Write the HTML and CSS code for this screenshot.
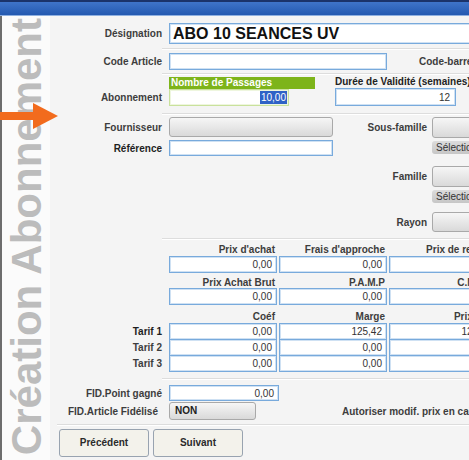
FILE: index.html
```html
<!DOCTYPE html>
<html lang="fr">
<head>
<meta charset="utf-8">
<title>Création Abonnement</title>
<link rel="stylesheet" href="styles.css">
</head>
<body>
<div class="app">
  <div class="titlebar"></div>
  <div class="body">
    <aside class="side"><div class="side-title">Création Abonnement</div></aside>
    <main class="main">
      <div class="form">
        <div class="row row-desig">
          <div class="lbl">Désignation</div>
          <div class="inp desig">ABO 10 SEANCES UV</div>
        </div>
        <div class="sep"></div>
        <div class="row row-code">
          <div class="lbl">Code Article</div>
          <div class="inp code"></div>
          <div class="lbl-free barre">Code-barre</div>
        </div>
        <div class="sep sep-b"></div>
        <div class="row row-abo">
          <div class="lbl lbl-abo">Abonnement</div>
          <div class="abo-col">
            <div class="green-head">Nombre de Passages</div>
            <div class="inp green-inp"><span class="sel">10,00</span></div>
          </div>
          <div class="duree-col">
            <div class="duree-head">Durée de Validité (semaines)</div>
            <div class="inp duree">12</div>
          </div>
        </div>
        <div class="sep sep-c"></div>
        <div class="section">
          <div class="sec-left">
            <div class="row row-four">
              <div class="lbl">Fournisseur</div>
              <div class="btn four"></div>
            </div>
            <div class="row row-ref">
              <div class="lbl lbl-dark">Référence</div>
              <div class="inp ref"></div>
            </div>
          </div>
          <div class="sec-right">
            <div class="rrow r-sous">
              <div class="rlbl">Sous-famille</div>
              <div class="btn rbtn"></div>
            </div>
            <div class="rrow r-sel1">
              <div class="rlbl"></div>
              <div class="selbtn">Sélection</div>
            </div>
            <div class="rrow r-fam">
              <div class="rlbl">Famille</div>
              <div class="btn rbtn"></div>
            </div>
            <div class="rrow r-sel2">
              <div class="rlbl"></div>
              <div class="selbtn">Sélection</div>
            </div>
            <div class="rrow r-ray">
              <div class="rlbl">Rayon</div>
              <div class="btn rbtn"></div>
            </div>
          </div>
        </div>
        <div class="sep sep-d"></div>

        <div class="prow phead h1">
          <div class="lbl"></div>
          <div class="pc">Prix d'achat</div>
          <div class="pc">Frais d'approche</div>
          <div class="pc">Prix de revient</div>
        </div>
        <div class="prow">
          <div class="lbl"></div>
          <div class="inp pcell">0,00</div>
          <div class="inp pcell">0,00</div>
          <div class="inp pcell">0,00</div>
        </div>
        <div class="prow phead h2">
          <div class="lbl"></div>
          <div class="pc">Prix Achat Brut</div>
          <div class="pc">P.A.M.P</div>
          <div class="pc">C.M.U.P</div>
        </div>
        <div class="prow">
          <div class="lbl"></div>
          <div class="inp pcell">0,00</div>
          <div class="inp pcell">0,00</div>
          <div class="inp pcell">0,00</div>
        </div>
        <div class="prow phead h3">
          <div class="lbl"></div>
          <div class="pc">Coéf</div>
          <div class="pc">Marge</div>
          <div class="pc">Prix TTC</div>
        </div>
        <div class="prow trow">
          <div class="lbl lbl-dark">Tarif 1</div>
          <div class="inp pcell">0,00</div>
          <div class="inp pcell">125,42</div>
          <div class="inp pcell">125,42</div>
        </div>
        <div class="prow trow">
          <div class="lbl">Tarif 2</div>
          <div class="inp pcell">0,00</div>
          <div class="inp pcell">0,00</div>
          <div class="inp pcell">0,00</div>
        </div>
        <div class="prow trow">
          <div class="lbl">Tarif 3</div>
          <div class="inp pcell">0,00</div>
          <div class="inp pcell">0,00</div>
          <div class="inp pcell">0,00</div>
        </div>
        <div class="sep sep-e"></div>
        <div class="row row-fid1">
          <div class="lbl">FID.Point gagné</div>
          <div class="inp fidp">0,00</div>
        </div>
        <div class="row row-fid2">
          <div class="lbl lbl-fid">FID.Article Fidélisé</div>
          <div class="btn non">NON</div>
          <div class="lbl-free autor">Autoriser modif. prix en caisse</div>
        </div>
        <div class="sep sep-f"></div>
        <div class="actions">
          <div class="act">Précédent</div>
          <div class="act">Suivant</div>
        </div>
      </div>
    </main>
  </div>
  <svg class="arrow" width="60" height="27" viewBox="0 0 60 27">
    <rect x="0" y="9" width="34" height="8" fill="#f26b1d"/>
    <polygon points="33,0 58,13 33,26" fill="#f26b1d"/>
  </svg>
</div>
</body>
</html>
```

FILE: styles.css
```css
* { box-sizing: border-box; }
html, body { margin: 0; padding: 0; }
body {
  font-family: "Liberation Sans", Arial, sans-serif;
  font-size: 10px;
  color: #333;
  background: #f4f4f4;
}
.app {
  position: relative;
  width: 469px;
  height: 460px;
  overflow: hidden;
  display: flex;
  flex-direction: column;
}
.titlebar {
  flex: none;
  height: 16px;
  border-top: 2px solid #1b336a;
  border-bottom: 1px solid #8fb0e0;
  background: linear-gradient(#3f74c9, #2459b0);
}
.body {
  flex: 1;
  display: flex;
  min-height: 0;
}
.side {
  flex: none;
  width: 50px;
  border-left: 2px solid #6d6d6d;
  background: #fbfbfb;
  display: flex;
  flex-direction: column;
  justify-content: flex-end;
  align-items: flex-start;
  padding-bottom: 5px;
  padding-left: 4px;
  overflow: hidden;
}
.side-title {
  writing-mode: vertical-rl;
  transform: rotate(180deg);
  font-size: 42px;
  line-height: 42px;
  font-weight: bold;
  color: #bcbcbc;
  white-space: nowrap;
}
.main {
  flex: 1;
  background: #f4f4f4;
  overflow: hidden;
  min-width: 0;
}
.form {
  width: 560px;
  padding-top: 7px;
}
.row {
  display: flex;
  align-items: center;
}
.lbl {
  flex: none;
  width: 112px;
  margin-right: 7px;
  text-align: right;
  font-weight: bold;
  color: #3d3d3d;
  white-space: nowrap;
}
.lbl-dark { color: #1e1e1e; }
.lbl-free {
  font-weight: bold;
  color: #3d3d3d;
  white-space: nowrap;
}
.inp {
  background: #fff;
  border: 1px solid #78aadc;
  box-shadow: inset 0 0 0 1px #cfe1f3;
  display: flex;
  align-items: center;
  justify-content: flex-end;
  padding-right: 4px;
  color: #333;
  white-space: nowrap;
}
.sep {
  height: 1px;
  background: #dddddd;
  margin-left: 112px;
  box-shadow: 0 1px 0 #ffffff;
}

/* Désignation */
.row-desig { height: 21px; }
.desig {
  width: 330px;
  height: 21px;
  justify-content: flex-start;
  padding-left: 3px;
  font-size: 16px;
  font-weight: bold;
  color: #111;
}
.row-desig + .sep { margin-top: 4px; }

/* Code article */
.row-code { height: 17px; margin-top: 4px; }
.code { width: 218px; height: 17px; }
.barre { margin-left: 32px; }
.sep-b { margin-top: 3px; }

/* Abonnement */
.row-abo { margin-top: 2px; align-items: flex-end; }
.lbl-abo { height: 17px; line-height: 17px; }
.abo-col { width: 120px; display: flex; flex-direction: column; }
.green-head {
  width: 146px;
  height: 12px;
  line-height: 12px;
  background: #7db41a;
  color: #fff;
  font-weight: bold;
  padding-left: 2px;
  white-space: nowrap;
}
.green-inp {
  height: 17px;
  border-color: #c9e19c;
  box-shadow: inset 0 0 0 1px #eef6de;
  padding-right: 1px;
}
.sel {
  background: #2f62c6;
  color: #fff;
  padding: 0 1px;
  line-height: 13px;
}
.duree-col {
  margin-left: 46px;
  display: flex;
  flex-direction: column;
  align-items: flex-start;
}
.duree-head {
  height: 12px;
  line-height: 12px;
  font-weight: bold;
  color: #222;
  white-space: nowrap;
}
.duree { width: 121px; height: 18px; padding-right: 5px; }
.sep-c { margin-top: 7px; }

/* Section fournisseur / familles */
.section { display: flex; margin-top: 3px; }
.sec-left { width: 283px; flex: none; }
.btn {
  background: linear-gradient(#f6f6f6, #d9d9d9);
  border: 1px solid #a9a9a9;
  border-radius: 3px;
}
.row-four { height: 20px; }
.four { width: 164px; height: 20px; }
.row-ref { height: 16px; margin-top: 3px; }
.ref { width: 164px; height: 16px; }
.sec-right { display: flex; flex-direction: column; }
.rrow { display: flex; align-items: center; }
.rlbl {
  width: 94px;
  margin-right: 5px;
  text-align: right;
  font-weight: bold;
  color: #3d3d3d;
  white-space: nowrap;
}
.rbtn { width: 60px; }
.r-sous { height: 21px; }
.r-sous .rbtn { height: 21px; }
.r-sel1 { margin-top: 3px; height: 13px; }
.r-fam { margin-top: 12px; height: 21px; }
.r-fam .rbtn { height: 21px; }
.r-sel2 { margin-top: 3px; height: 13px; }
.r-ray { margin-top: 9px; height: 20px; }
.r-ray .rbtn { height: 20px; }
.selbtn {
  width: 60px;
  height: 13px;
  line-height: 13px;
  background: linear-gradient(#dcdcdc, #c6c6c6);
  border-radius: 3px;
  padding-left: 4px;
  color: #333;
  white-space: nowrap;
  overflow: hidden;
}
.sep-d { margin-top: 6px; }

/* Prix */
.prow { display: flex; }
.prow .lbl { height: 17px; line-height: 17px; }
.pc {
  width: 108px;
  margin-right: 2px;
  text-align: right;
  padding-right: 2px;
  font-weight: bold;
  color: #3d3d3d;
  white-space: nowrap;
}
.phead { align-items: flex-end; }
.phead .lbl { height: auto; }
.h1 { height: 17px; padding-bottom: 1px; }
.h2 { height: 15px; }
.h3 { height: 18px; padding-bottom: 1px; }
.pcell { width: 108px; height: 17px; margin-right: 2px; }
.trow + .trow { margin-top: -1px; }
.sep-e { margin-top: 6px; }

/* FID */
.row-fid1 { margin-top: 6px; height: 16px; }
.fidp { width: 110px; height: 16px; }
.row-fid2 { margin-top: 1px; height: 18px; }
.lbl-fid { padding-right: 4px; }
.non {
  width: 87px;
  height: 18px;
  line-height: 16px;
  padding-left: 5px;
  font-weight: bold;
  color: #222;
}
.autor { margin-left: 86px; }
.sep-f { margin-top: 4px; margin-left: 7px; }

/* Boutons */
.actions {
  display: flex;
  gap: 4px;
  margin-top: 4px;
  margin-left: 9px;
}
.act {
  width: 90px;
  height: 28px;
  line-height: 26px;
  text-align: center;
  background: #f3f2eb;
  border: 1px solid #98a3b0;
  border-radius: 3px;
  font-weight: bold;
  color: #2a2a2a;
}

/* Flèche */
.arrow {
  position: absolute;
  left: 0;
  top: 103px;
}
```
